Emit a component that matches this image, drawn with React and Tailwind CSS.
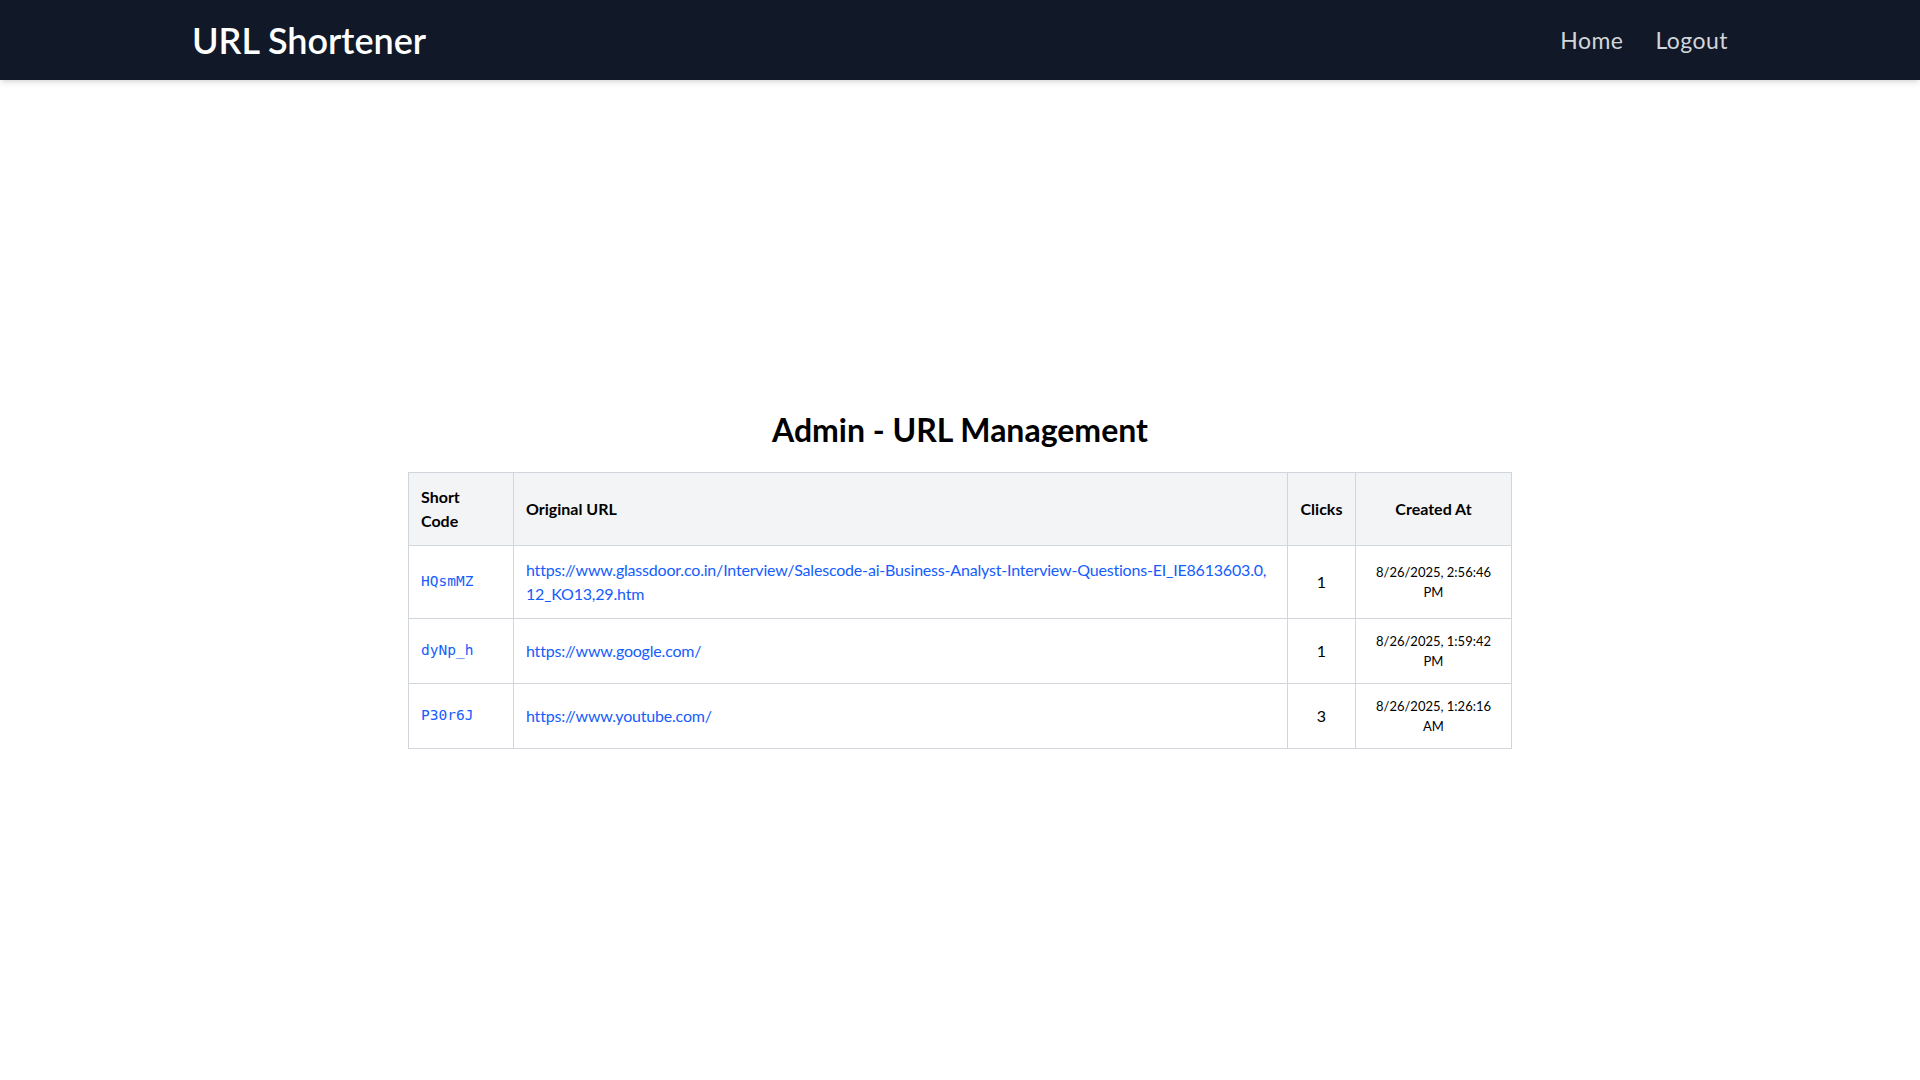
import { useState } from 'react';

const urls = [
  {
    id: 1,
    shortCode: 'HQsmMZ',
    originalUrl:
      'https://www.glassdoor.co.in/Interview/Salescode-ai-Business-Analyst-Interview-Questions-EI_IE8613603.0,12_KO13,29.htm',
    clicks: 1,
    createdAt: '8/26/2025, 2:56:46 PM',
  },
  {
    id: 2,
    shortCode: 'dyNp_h',
    originalUrl: 'https://www.google.com/',
    clicks: 1,
    createdAt: '8/26/2025, 1:59:42 PM',
  },
  {
    id: 3,
    shortCode: 'P30r6J',
    originalUrl: 'https://www.youtube.com/',
    clicks: 3,
    createdAt: '8/26/2025, 1:26:16 AM',
  },
];

function Navbar() {
  return (
    <nav className="bg-[#111827] shadow-md">
      <div className="max-w-[1536px] mx-auto h-20 flex items-center justify-between">
        <a href="#" className="text-white text-[36px] font-semibold">
          URL Shortener
        </a>
        <div className="flex items-center gap-8 text-[23px] tracking-[0.02em] text-gray-300">
          <a href="#" className="hover:text-white">Home</a>
          <button className="hover:text-white">Logout</button>
        </div>
      </div>
    </nav>
  );
}

function App() {
  const [list] = useState(urls);

  return (
    <div
      className="h-screen flex flex-col bg-white text-black"
      style={{ fontFamily: '"Lato", "Open Sans", sans-serif' }}
    >
      <Navbar />

      {/* Admin table */}
      <main className="flex-1 flex items-center justify-center">
        <div className="w-full max-w-6xl p-6">
          <h2 className="text-[32px] leading-9 font-bold text-center mb-6">Admin - URL Management</h2>
          <table className="w-full table-fixed border-collapse border border-gray-300">
            <thead>
              <tr className="bg-gray-100">
                <th className="w-[105px] border border-gray-300 p-3 text-left font-bold">
                  Short
                  <br />
                  Code
                </th>
                <th className="border border-gray-300 p-3 text-left font-bold">Original URL</th>
                <th className="w-[68px] border border-gray-300 p-3 text-center font-bold">Clicks</th>
                <th className="w-[156px] border border-gray-300 p-3 text-center font-bold">Created At</th>
              </tr>
            </thead>
            <tbody>
              {list.map((u) => (
                <tr key={u.id}>
                  <td
                    className="border border-gray-300 p-3 text-[14.5px] text-blue-600"
                    style={{ fontFamily: '"DejaVu Sans Mono", monospace' }}
                  >
                    {u.shortCode}
                  </td>
                  <td className="border border-gray-300 p-3 break-all tracking-[-0.012em]">
                    <a href={u.originalUrl} className="text-blue-600 hover:underline">
                      {u.originalUrl}
                    </a>
                  </td>
                  <td className="border border-gray-300 p-3 text-center">{u.clicks}</td>
                  <td className="border border-gray-300 px-3 py-3 text-center text-[13px] leading-5">
                    {u.createdAt}
                  </td>
                </tr>
              ))}
            </tbody>
          </table>
        </div>
      </main>
    </div>
  );
}

export default App;
